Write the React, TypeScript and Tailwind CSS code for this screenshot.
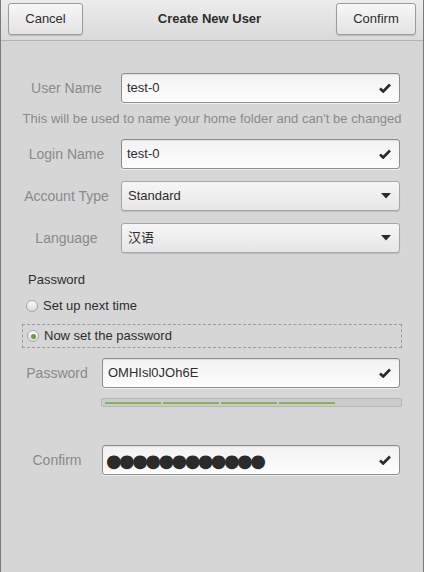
import React from 'react';

const font = { fontFamily: '"Liberation Sans", Arial, "Noto Sans CJK SC", sans-serif' };

function Check() {
  return (
    <svg width="12" height="10" viewBox="0 0 12 10" className="shrink-0">
      <path d="M1 5.5 L4.2 8.5 L11 1.5" fill="none" stroke="#2a2a2a" strokeWidth="2.6" strokeLinejoin="miter" />
    </svg>
  );
}

function Arrow() {
  return (
    <svg width="10" height="6" viewBox="0 0 10 6" className="shrink-0">
      <path d="M0 0 L10 0 L5 5.5 Z" fill="#2a2a2a" />
    </svg>
  );
}

function Entry({ value, width }: { value: React.ReactNode; width: string }) {
  return (
    <div
      className={`${width} h-[30px] flex items-center justify-between pl-[5px] pr-[8px] rounded-[3px] border border-[#8e8e8e] bg-gradient-to-b from-[#f2f2f2] to-[#fdfdfd] shadow-[inset_0_1px_1px_rgba(0,0,0,0.08),0_1px_0_rgba(255,255,255,0.6)] text-[13px] text-[#2e2e2e]`}
    >
      <span>{value}</span>
      <Check />
    </div>
  );
}

function Combo({ value }: { value: string }) {
  return (
    <div className="w-[279px] h-[30px] flex items-center justify-between pl-[6px] pr-[8px] rounded-[3px] border border-[#a6a6a6] bg-gradient-to-b from-[#f6f6f6] to-[#e6e6e6] shadow-[0_1px_1px_rgba(0,0,0,0.12)] text-[13px] text-[#2e2e2e]">
      <span>{value}</span>
      <Arrow />
    </div>
  );
}

function Label({ text, width }: { text: string; width: string }) {
  return <div className={`${width} text-center text-[14px] text-[#8a8a8a]`}>{text}</div>;
}

function Radio({ checked }: { checked?: boolean }) {
  return (
    <div className="w-[12px] h-[12px] rounded-full border border-[#a8a8a8] bg-gradient-to-b from-[#fafafa] to-[#dcdcdc] flex items-center justify-center shrink-0">
      {checked && <div className="w-[5px] h-[5px] rounded-full bg-[#6c9a3e]" />}
    </div>
  );
}

export default function App() {
  return (
    <div className="w-[424px] h-[572px] bg-[#d6d6d6] border-x border-[#7a7a7a] flex flex-col" style={font}>
      {/* header bar */}
      <div className="h-[41px] shrink-0 flex items-start justify-between px-[7px] pt-[3px] bg-gradient-to-b from-[#ececec] to-[#dadada] border-b border-[#b3b3b3]">
        <button className="w-[75px] h-[32px] rounded-[3px] border border-[#9c9c9c] bg-gradient-to-b from-[#f7f7f7] to-[#e3e3e3] shadow-[0_1px_1px_rgba(0,0,0,0.15)] text-[13px] text-[#2e2e2e]">
          Cancel
        </button>
        <div className="h-[32px] flex items-center text-[13px] font-bold text-[#2e2e2e]">Create New User</div>
        <button className="w-[80px] h-[32px] rounded-[3px] border border-[#9c9c9c] bg-gradient-to-b from-[#f7f7f7] to-[#e3e3e3] shadow-[0_1px_1px_rgba(0,0,0,0.15)] text-[13px] text-[#2e2e2e]">
          Confirm
        </button>
      </div>

      <div className="flex flex-col pt-[32px]">
        <div className="flex items-center pl-[11px]">
          <Label text="User Name" width="w-[109px]" />
          <Entry value="test-0" width="w-[279px]" />
        </div>
        <div className="mt-[8px] h-[16px] leading-[16px] text-center text-[13px] tracking-[0.06px] text-[#8a8a8a]">
          This will be used to name your home folder and can't be changed
        </div>
        <div className="mt-[12px] flex items-center pl-[11px]">
          <Label text="Login Name" width="w-[109px]" />
          <Entry value="test-0" width="w-[279px]" />
        </div>
        <div className="mt-[12px] flex items-center pl-[11px]">
          <Label text="Account Type" width="w-[109px]" />
          <Combo value="Standard" />
        </div>
        <div className="mt-[12px] flex items-center pl-[11px]">
          <Label text="Language" width="w-[109px]" />
          <Combo value="汉语" />
        </div>

        <div className="mt-[19px] h-[16px] leading-[16px] pl-[27px] text-[13px] text-[#2e2e2e]">Password</div>
        <div className="mt-[10px] h-[16px] flex items-center gap-[5px] pl-[25px] text-[13px] text-[#2e2e2e]">
          <Radio />
          <span>Set up next time</span>
        </div>
        <div className="mt-[10px] ml-[21px] w-[380px] h-[24px] flex items-center gap-[5px] pl-[4px] border border-dashed border-[#9a9a9a] text-[13px] text-[#2e2e2e]">
          <Radio checked />
          <span>Now set the password</span>
        </div>

        <div className="mt-[10px] flex items-center pl-[11px]">
          <Label text="Password" width="w-[90px]" />
          <Entry value="OMHIsl0JOh6E" width="w-[298px]" />
        </div>
        <div className="mt-[10px] ml-[100px] w-[301px] h-[9px] rounded-[2px] border border-[#b5b5b5] bg-[#cbcbcb] flex items-center gap-[2px] px-[3px]">
          <div className="w-[56px] h-[2px] bg-[#86b25a]" />
          <div className="w-[56px] h-[2px] bg-[#86b25a]" />
          <div className="w-[56px] h-[2px] bg-[#86b25a]" />
          <div className="w-[56px] h-[2px] bg-[#86b25a]" />
        </div>

        <div className="mt-[38px] flex items-center pl-[11px]">
          <Label text="Confirm" width="w-[90px]" />
          <Entry
            value={
              <span className="-ml-[2px] text-[18px] tracking-[-2.6px] text-[#2b2b2b]" style={{ fontFamily: '"DejaVu Sans", sans-serif' }}>
                ●●●●●●●●●●●●
              </span>
            }
            width="w-[298px]"
          />
        </div>
      </div>
    </div>
  );
}
